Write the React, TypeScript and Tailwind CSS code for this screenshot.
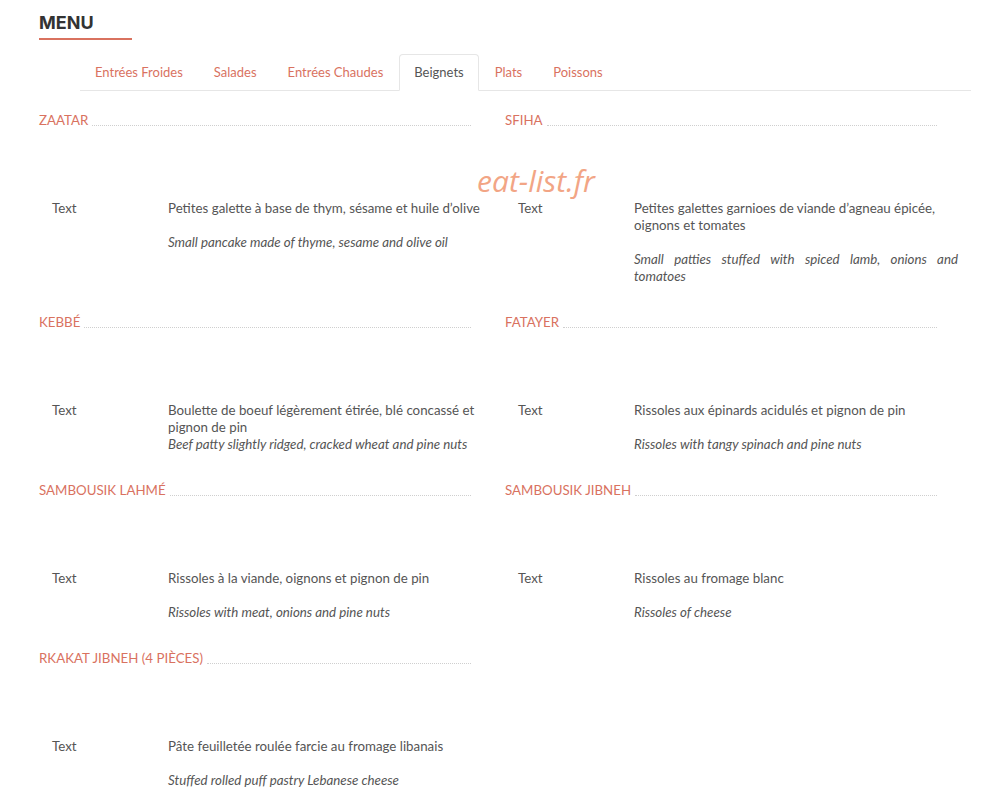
import React, { useState } from 'react';

interface Dish {
  name: string;
  label: string;
  fr: string;
  en: string;
  // true when the english line follows directly under the french one
  tight?: boolean;
}

const TABS = ['Entrées Froides', 'Salades', 'Entrées Chaudes', 'Beignets', 'Plats', 'Poissons'];

const BEIGNETS: Dish[] = [
  {
    name: 'Zaatar',
    label: 'Text',
    fr: 'Petites galette à base de thym, sésame et huile d’olive',
    en: 'Small pancake made of thyme, sesame and olive oil'
  },
  {
    name: 'Sfiha',
    label: 'Text',
    fr: 'Petites galettes garnioes de viande d’agneau épicée, oignons et tomates',
    en: 'Small patties stuffed with spiced lamb, onions and tomatoes'
  },
  {
    name: 'Kebbé',
    label: 'Text',
    fr: 'Boulette de boeuf légèrement étirée, blé concassé et pignon de pin',
    en: 'Beef patty slightly ridged, cracked wheat and pine nuts',
    tight: true
  },
  {
    name: 'Fatayer',
    label: 'Text',
    fr: 'Rissoles aux épinards acidulés et pignon de pin',
    en: 'Rissoles with tangy spinach and pine nuts'
  },
  {
    name: 'Sambousik Lahmé',
    label: 'Text',
    fr: 'Rissoles à la viande, oignons et pignon de pin',
    en: 'Rissoles with meat, onions and pine nuts'
  },
  {
    name: 'Sambousik Jibneh',
    label: 'Text',
    fr: 'Rissoles au fromage blanc',
    en: 'Rissoles of cheese'
  },
  {
    name: 'Rkakat Jibneh (4 pièces)',
    label: 'Text',
    fr: 'Pâte feuilletée roulée farcie au fromage libanais',
    en: 'Stuffed rolled puff pastry Lebanese cheese'
  }
];

const DishCard = ({ dish }: { dish: Dish }) => (
  <div className="pb-[29px]">
    <div className="flex items-end mr-[34px] h-[17px]">
      <h3 className="text-[13.3px] leading-[17px] uppercase text-[#d9725f] whitespace-nowrap">{dish.name}</h3>
      <div className="flex-1 ml-[4px] mb-[3px] border-b border-dotted border-[#cfcfcf]"></div>
    </div>
    <div className="flex pt-[71px] text-[13.3px] leading-[17px] text-[#555]">
      <div className="w-[129px] pl-[13px] shrink-0">{dish.label}</div>
      <div className="w-[324px]">
        <p className={dish.tight ? '' : 'mb-[17px]'}>{dish.fr}</p>
        <p className="italic text-justify">{dish.en}</p>
      </div>
    </div>
  </div>
);

export default function App() {
  const [activeTab, setActiveTab] = useState('Beignets');

  return (
    <div className="relative min-h-screen bg-white font-['Lato','Liberation_Sans',sans-serif] pl-[39px] pt-[13px]">
      <h1 className="font-['Inter','Liberation_Sans',sans-serif] text-[18px] font-bold text-[#333] leading-[20px]">MENU</h1>
      <div className="w-[93px] h-[2px] bg-[#d9725f] mt-[5px]"></div>

      <ul className="flex ml-[41px] mr-[18px] mt-[14px] border-b border-[#e6e6e6]">
        {TABS.map(tab => (
          <li key={tab} className="-mb-px mr-[1px]">
            <button
              onClick={() => setActiveTab(tab)}
              className={`px-[14px] h-[37px] text-[13px] border rounded-t-[4px] ${
                tab === activeTab
                  ? 'bg-white text-[#555] border-[#e6e6e6] border-b-white'
                  : 'text-[#d9725f] border-transparent'
              }`}
            >
              {tab}
            </button>
          </li>
        ))}
      </ul>

      <div className="grid grid-cols-[466px_466px] pt-[21px]">
        {BEIGNETS.map(dish => <DishCard key={dish.name} dish={dish} />)}
      </div>

      {/* site watermark over the list */}
      <div className="absolute left-[477px] top-[162px] text-[30px] italic text-[#f2a585] font-['Open_Sans','Liberation_Sans',sans-serif] leading-[38px] pointer-events-none">
        eat-list.fr
      </div>
    </div>
  );
}
